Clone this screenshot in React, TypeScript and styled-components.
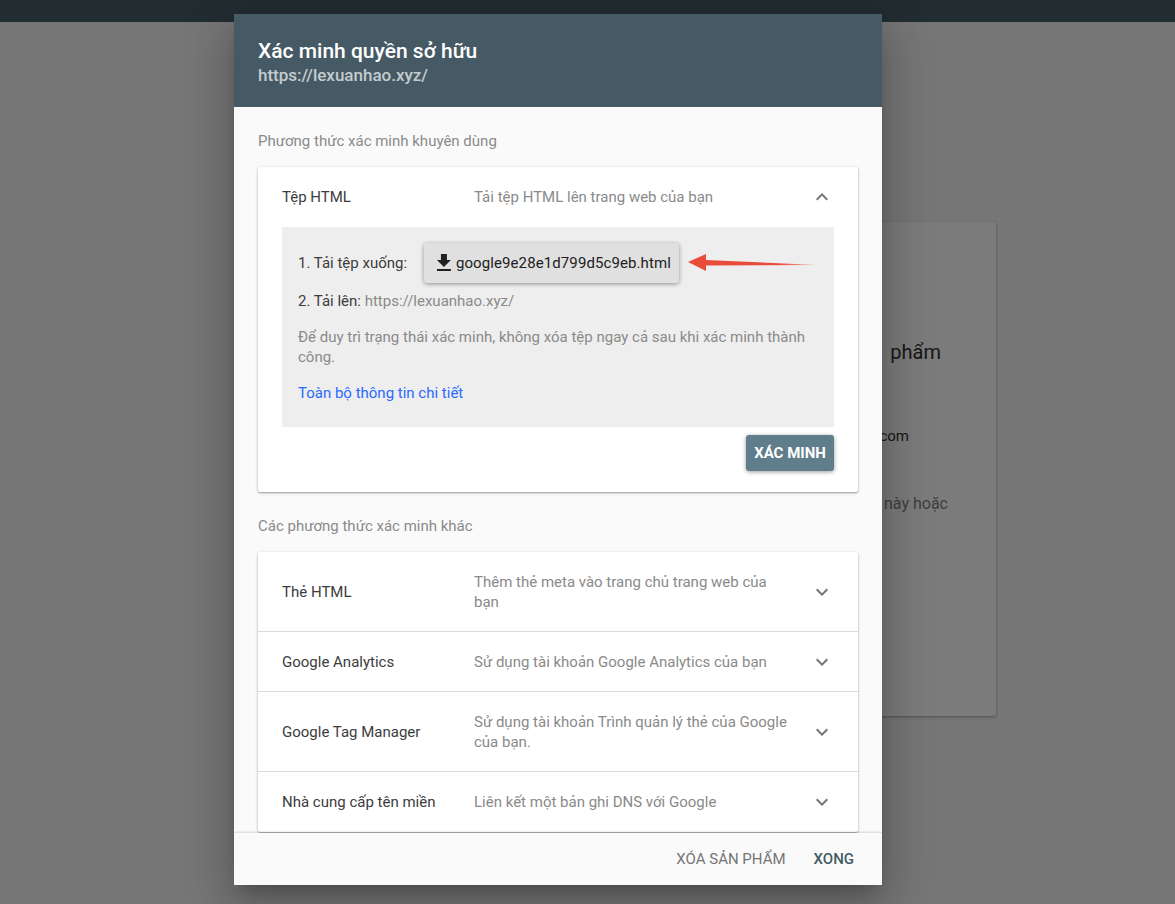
import styled, { createGlobalStyle } from "styled-components";

const GlobalStyle = createGlobalStyle`
  html, body {
    margin: 0;
    padding: 0;
    height: 100%;
    overflow: hidden;
    background: #767676;
    font-family: Roboto, "Noto Sans", sans-serif;
  }
`;

const ChevronDown = () => (
  <svg width="24" height="24" viewBox="0 0 24 24" fill="#757575">
    <path d="M16.59 8.59L12 13.17 7.41 8.59 6 10l6 6 6-6z" />
  </svg>
);

const ChevronUp = () => (
  <svg width="24" height="24" viewBox="0 0 24 24" fill="#757575">
    <path d="M12 8l-6 6 1.41 1.41L12 10.83l4.59 4.58L18 14z" />
  </svg>
);

const DownloadIcon = () => (
  <svg width="24" height="24" viewBox="0 0 24 24" fill="#212121">
    <path d="M19 9h-4V3H9v6H5l7 7 7-7zM5 18v2h14v-2H5z" />
  </svg>
);

const otherMethods = [
  {
    name: "Thẻ HTML",
    desc: "Thêm thẻ meta vào trang chủ trang web của bạn",
  },
  {
    name: "Google Analytics",
    desc: "Sử dụng tài khoản Google Analytics của bạn",
  },
  {
    name: "Google Tag Manager",
    desc: "Sử dụng tài khoản Trình quản lý thẻ của Google của bạn.",
  },
  {
    name: "Nhà cung cấp tên miền",
    desc: "Liên kết một bản ghi DNS với Google",
  },
];

const App = () => {
  return (
    <StPage>
      <GlobalStyle />
      <StTopBar />
      <StBackCard>
        <StBackTitle>Thêm sản phẩm</StBackTitle>
        <StBackEmail>lexuanhao@gmail.com</StBackEmail>
        <StBackHint>Chọn sản phẩm này hoặc</StBackHint>
      </StBackCard>

      <StDialog>
        <StHeader>
          <StTitle>Xác minh quyền sở hữu</StTitle>
          <StSubtitle>https://lexuanhao.xyz/</StSubtitle>
        </StHeader>

        <StBody>
          <StSectionLabel>Phương thức xác minh khuyên dùng</StSectionLabel>
          <StCard>
            <StMethodRow>
              <StMethodName>Tệp HTML</StMethodName>
              <StMethodDesc>Tải tệp HTML lên trang web của bạn</StMethodDesc>
              <ChevronUp />
            </StMethodRow>
            <StPanel>
              <StStepRow>
                <StStepText>1. Tải tệp xuống:</StStepText>
                <StDownloadButton>
                  <DownloadIcon />
                  google9e28e1d799d5c9eb.html
                </StDownloadButton>
              </StStepRow>
              <StUploadLine>
                2. Tải lên: <StMuted>https://lexuanhao.xyz/</StMuted>
              </StUploadLine>
              <StNote>
                Để duy trì trạng thái xác minh, không xóa tệp ngay cả sau khi
                xác minh thành công.
              </StNote>
              <StLink href="#">Toàn bộ thông tin chi tiết</StLink>
              <StArrow width="130" height="20" viewBox="0 0 130 20">
                <defs>
                  <linearGradient id="arrowFade" x1="0" x2="1" y1="0" y2="0">
                    <stop offset="0" stopColor="#ea4c3c" />
                    <stop offset="0.7" stopColor="#ea4c3c" />
                    <stop offset="1" stopColor="#ea4c3c" stopOpacity="0.3" />
                  </linearGradient>
                </defs>
                <path
                  d="M0 9 L18 1 L18 7 L130 12 L18 12.5 L18 18 Z"
                  fill="url(#arrowFade)"
                />
              </StArrow>
            </StPanel>
            <StCardActions>
              <StVerifyButton>XÁC MINH</StVerifyButton>
            </StCardActions>
          </StCard>

          <StSectionLabel>Các phương thức xác minh khác</StSectionLabel>
          <StCard>
            {otherMethods.map((method) => (
              <StMethodRow key={method.name} $divided>
                <StMethodName>{method.name}</StMethodName>
                <StMethodDesc>{method.desc}</StMethodDesc>
                <ChevronDown />
              </StMethodRow>
            ))}
          </StCard>
        </StBody>

        <StFooter>
          <StFooterButton>XÓA SẢN PHẨM</StFooterButton>
          <StFooterButton $primary>XONG</StFooterButton>
        </StFooter>
      </StDialog>
    </StPage>
  );
};

export default App;

const StPage = styled.div`
  position: relative;
  display: flex;
  flex-direction: column;
  height: 904px;
  background: #767676;
`;

const StTopBar = styled.div`
  flex: none;
  height: 22px;
  background: #222d32;
`;

const StBackCard = styled.div`
  display: flex;
  flex-direction: column;
  align-items: flex-end;
  box-sizing: border-box;
  width: 700px;
  height: 494px;
  margin: 200px 0 0 296px;
  background: #7b7b7b;
  border-radius: 2px;
  box-shadow: 0 1px 3px rgba(0, 0, 0, 0.35);
`;

const StBackTitle = styled.div`
  margin: 118px 55px 0 0;
  font-size: 20px;
  font-weight: 400;
  word-spacing: 3px;
  line-height: 24px;
  color: #161616;
`;

const StBackEmail = styled.div`
  margin: 60px 87px 0 0;
  font-size: 15px;
  font-weight: 400;
  line-height: 24px;
  color: #161616;
`;

const StBackHint = styled.div`
  margin: 44px 48px 0 0;
  font-size: 16px;
  line-height: 24px;
  color: #3f3f3f;
`;

const StDialog = styled.div`
  position: absolute;
  top: 14px;
  left: 234px;
  display: flex;
  flex-direction: column;
  width: 648px;
  height: 871px;
  overflow: hidden;
  background: #fafafa;
  box-shadow: 0 11px 15px -7px rgba(0, 0, 0, 0.2),
    0 24px 38px 3px rgba(0, 0, 0, 0.14), 0 9px 46px 8px rgba(0, 0, 0, 0.12);
`;

const StHeader = styled.div`
  flex: none;
  box-sizing: border-box;
  height: 93px;
  padding: 25px 24px 0;
  background: #455a64;
`;

const StTitle = styled.div`
  font-size: 21px;
  font-weight: 500;
  line-height: 24px;
  color: #fff;
`;

const StSubtitle = styled.div`
  font-size: 17px;
  font-weight: 500;
  line-height: 24px;
  color: rgba(255, 255, 255, 0.7);
`;

const StBody = styled.div`
  flex: 1;
  min-height: 0;
  overflow: hidden;
  padding: 0 24px;
`;

const StSectionLabel = styled.div`
  padding: 24px 0 16px;
  font-size: 15px;
  line-height: 20px;
  color: #8a8a8a;
`;

const StCard = styled.div`
  background: #fff;
  border-radius: 2px;
  box-shadow: 0 1px 3px rgba(0, 0, 0, 0.3), 0 1px 1px rgba(0, 0, 0, 0.14);
`;

const StMethodRow = styled.div<{ $divided?: boolean }>`
  display: flex;
  align-items: center;
  padding: 0 24px;
  border-bottom: 1px solid
    ${({ $divided }) => ($divided ? "#dcdcdc" : "transparent")};

  &:last-child {
    border-bottom-color: transparent;
  }
`;

const StMethodName = styled.div`
  flex: none;
  width: 192px;
  font-size: 15px;
  line-height: 20px;
  color: #3c3c3c;
`;

const StMethodDesc = styled.div`
  flex: 1;
  padding: 20px 20px 19px 0;
  font-size: 15px;
  line-height: 20px;
  color: #8a8a8a;
`;

const StPanel = styled.div`
  position: relative;
  box-sizing: border-box;
  height: 200px;
  margin: 0 24px;
  padding: 16px;
  background: #eee;
  font-size: 15px;
  line-height: 20px;
`;

const StStepRow = styled.div`
  display: flex;
  align-items: center;
  gap: 16px;
`;

const StStepText = styled.div`
  min-width: 110px;
  color: #3c3c3c;
`;

const StDownloadButton = styled.button`
  display: flex;
  align-items: center;
  height: 40px;
  width: 255px;
  padding: 0 8px;
  border: none;
  border-radius: 3px;
  background: #e0e0e0;
  box-shadow: 0 1px 4px rgba(0, 0, 0, 0.4);
  font-family: inherit;
  font-size: 15px;
  font-weight: 400;
  letter-spacing: 0.1px;
  white-space: nowrap;
  color: #212121;
`;

const StUploadLine = styled.div`
  margin-top: 8px;
  color: #3c3c3c;
`;

const StMuted = styled.span`
  color: #8a8a8a;
`;

const StNote = styled.div`
  margin-top: 16px;
  color: #8a8a8a;
`;

const StLink = styled.a`
  display: block;
  margin-top: 16px;
  color: #2a6aff;
  text-decoration: none;
`;

const StArrow = styled.svg`
  position: absolute;
  top: 26px;
  left: 406px;
`;

const StCardActions = styled.div`
  display: flex;
  justify-content: flex-end;
  padding: 8px 24px 21px;
`;

const StVerifyButton = styled.button`
  width: 88px;
  height: 36px;
  padding: 0;
  border: none;
  border-radius: 3px;
  background: #607d8b;
  box-shadow: 0 1px 4px rgba(0, 0, 0, 0.4);
  font-family: inherit;
  font-size: 15px;
  font-weight: 700;
  color: #fff;
`;

const StFooter = styled.div`
  position: relative;
  flex: none;
  display: flex;
  align-items: center;
  justify-content: flex-end;
  gap: 28px;
  box-sizing: border-box;
  height: 52px;
  padding: 0 28px 1px 0;
  background: #fafafa;
  box-shadow: 0 -1px 2px rgba(0, 0, 0, 0.15);
`;

const StFooterButton = styled.div<{ $primary?: boolean }>`
  font-size: 15px;
  font-weight: ${({ $primary }) => ($primary ? 500 : 400)};
  color: ${({ $primary }) => ($primary ? "#455a64" : "#757575")};
`;
